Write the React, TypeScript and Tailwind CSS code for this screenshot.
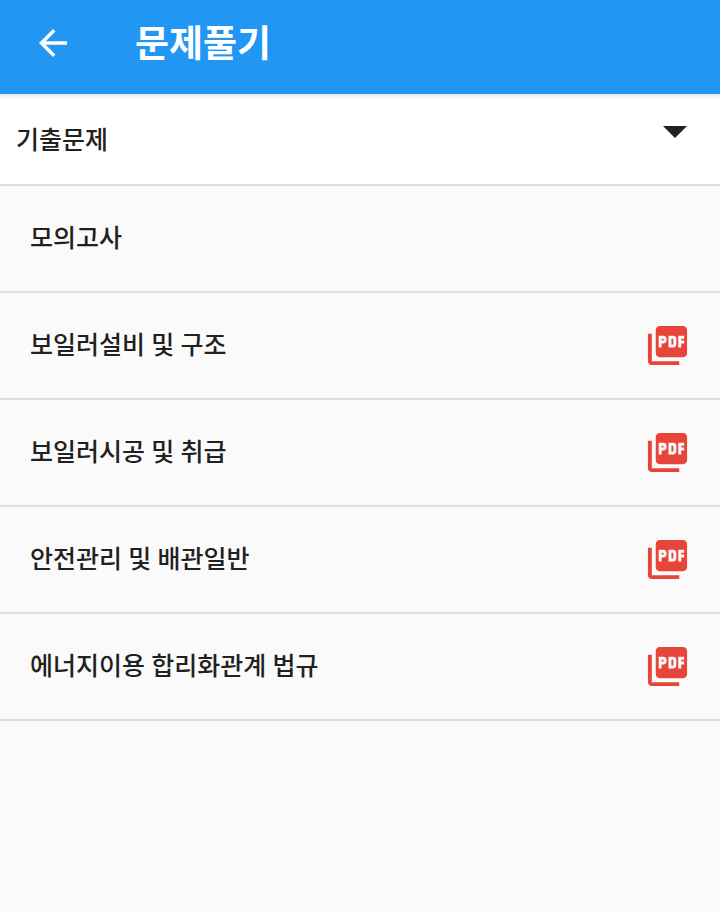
import { MdPictureAsPdf, MdArrowBack } from 'react-icons/md';

const SUBJECTS = [
  { title: '모의고사', pdf: false },
  { title: '보일러설비 및 구조', pdf: true },
  { title: '보일러시공 및 취급', pdf: true },
  { title: '안전관리 및 배관일반', pdf: true },
  { title: '에너지이용 합리화관계 법규', pdf: true },
];

export default function App() {
  return (
    <div className="h-[911px] w-[720px] overflow-hidden bg-[#fafafa] font-['Roboto','Noto_Sans_CJK_KR',sans-serif] text-[#212121]">
      {/* App bar */}
      <header className="relative z-10 flex h-[94px] items-center bg-[#2196f3] pb-[6px] text-white shadow-[0_2px_4px_rgba(0,0,0,0.12)]">
        <MdArrowBack className="mb-[2px] ml-[32px] h-[42px] w-[42px]" />
        <h1 className="ml-[61px] text-[37px] leading-none font-bold">문제풀기</h1>
      </header>

      {/* Category dropdown */}
      <div className="flex h-[92px] items-center justify-between border-b-2 border-[#dfdfdf] bg-white pl-[16px] pr-[33px]">
        <span className="mt-[2px] text-[25px] leading-none font-medium">기출문제</span>
        <div className="mb-[15px] h-0 w-0 border-x-[12px] border-t-[12px] border-x-transparent border-t-[#212121]" />
      </div>

      {/* Subject list */}
      <ul>
        {SUBJECTS.map((subject) => (
          <li
            key={subject.title}
            className="flex h-[107px] items-center justify-between border-b-2 border-[#dfdfdf] pl-[30px] pr-[29px]"
          >
            <span className="text-[25px] leading-none font-medium">{subject.title}</span>
            {subject.pdf && <MdPictureAsPdf className="mb-[1px] h-[47px] w-[47px] text-[#e8453a]" />}
          </li>
        ))}
      </ul>
    </div>
  );
}
